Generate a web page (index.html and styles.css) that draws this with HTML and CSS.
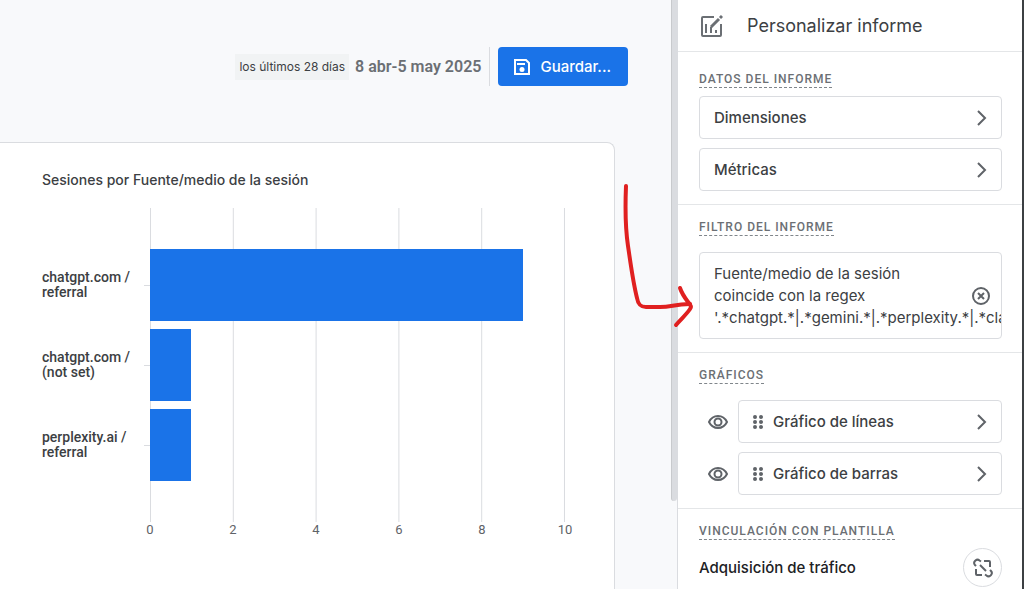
FILE: index.html
```html
<!DOCTYPE html>
<html lang="es">
<head>
  <meta charset="UTF-8">
  <meta name="viewport" content="width=device-width, initial-scale=1.0">
  <title>Personalizar informe</title>
  <link rel="stylesheet" href="styles.css">
</head>
<body>

  <main>
    <div class="toolbar">
      <span class="range-label">los últimos 28 días</span>
      <span class="range-dates">8 abr-5 may 2025</span>
      <span class="separator"></span>
      <button type="button" class="btn-save">
        <svg width="16" height="16" viewBox="0 0 16 16" fill="none" stroke="currentColor" stroke-width="2">
          <path d="M1 1h11l3 3v11H1z"/>
          <path d="M3 5h8" stroke-width="2"/>
          <circle cx="8" cy="10.5" r="2.5" fill="currentColor" stroke="none"/>
        </svg>
        Guardar...
      </button>
    </div>

    <section class="card">
      <h1>Sesiones por Fuente/medio de la sesión</h1>
      <div class="chart">
        <ul class="chart-labels">
          <li>chatgpt.com /<br>referral</li>
          <li>chatgpt.com /<br>(not set)</li>
          <li>perplexity.ai /<br>referral</li>
        </ul>
        <div class="plot">
          <div class="bar" style="width: 90%"></div>
          <div class="bar" style="width: 10%"></div>
          <div class="bar" style="width: 10%"></div>
        </div>
        <ul class="axis">
          <li>0</li>
          <li>2</li>
          <li>4</li>
          <li>6</li>
          <li>8</li>
          <li>10</li>
        </ul>
      </div>
    </section>
  </main>

  <div class="scrollbar"><div class="thumb"></div></div>

  <aside>
    <header>
      <svg width="24" height="24" viewBox="0 0 24 24" fill="none" stroke="currentColor" stroke-width="2">
        <path d="M15 3H4a1 1 0 0 0-1 1v17a1 1 0 0 0 1 1h17a1 1 0 0 0 1-1V10"/>
        <path d="M7 10v9M12 13v6M17 16v3"/>
        <path d="M12 13l8-8" stroke-width="3"/>
        <path d="M21 4l2-2" stroke-width="3"/>
      </svg>
      <h2>Personalizar informe</h2>
    </header>

    <section class="group">
      <h3>Datos del informe</h3>
      <div class="rows">
        <button type="button" class="row">
          <span>Dimensiones</span>
          <svg class="chevron" width="10" height="16" viewBox="0 0 10 16"><path d="M1 1l7 7-7 7"/></svg>
        </button>
        <button type="button" class="row">
          <span>Métricas</span>
          <svg class="chevron" width="10" height="16" viewBox="0 0 10 16"><path d="M1 1l7 7-7 7"/></svg>
        </button>
      </div>
    </section>

    <section class="group spaced">
      <h3>Filtro del informe</h3>
      <div class="filter">
        <p>Fuente/medio de la sesión<br>coincide con la regex<br>'.*chatgpt.*|.*gemini.*|.*perplexity.*|.*cla</p>
        <button type="button" class="btn-icon" aria-label="Quitar filtro">
          <svg width="20" height="20" viewBox="0 0 20 20" fill="none" stroke="currentColor" stroke-width="2">
            <circle cx="10" cy="10" r="8"/>
            <path d="M7 7l6 6M13 7l-6 6"/>
          </svg>
        </button>
      </div>
    </section>

    <section class="group spaced">
      <h3>Gráficos</h3>
      <div class="rows">
        <div class="chart-row">
          <button type="button" class="btn-icon" aria-label="Ocultar gráfico de líneas">
            <svg width="20" height="16" viewBox="0 0 20 16" fill="none" stroke="currentColor">
              <path d="M1 8C3 4 6 2 10 2s7 2 9 6c-2 4-5 6-9 6S3 12 1 8z" stroke-width="2"/>
              <circle cx="10" cy="8" r="3.5" stroke-width="2"/>
            </svg>
          </button>
          <button type="button" class="row">
            <svg class="grip" width="10" height="16" viewBox="0 0 10 16"><path d="M2 3h.01M8 3h.01M2 8h.01M8 8h.01M2 13h.01M8 13h.01"/></svg>
            <span>Gráfico de líneas</span>
            <svg class="chevron" width="10" height="16" viewBox="0 0 10 16"><path d="M1 1l7 7-7 7"/></svg>
          </button>
        </div>
        <div class="chart-row">
          <button type="button" class="btn-icon" aria-label="Ocultar gráfico de barras">
            <svg width="20" height="16" viewBox="0 0 20 16" fill="none" stroke="currentColor">
              <path d="M1 8C3 4 6 2 10 2s7 2 9 6c-2 4-5 6-9 6S3 12 1 8z" stroke-width="2"/>
              <circle cx="10" cy="8" r="3.5" stroke-width="2"/>
            </svg>
          </button>
          <button type="button" class="row">
            <svg class="grip" width="10" height="16" viewBox="0 0 10 16"><path d="M2 3h.01M8 3h.01M2 8h.01M8 8h.01M2 13h.01M8 13h.01"/></svg>
            <span>Gráfico de barras</span>
            <svg class="chevron" width="10" height="16" viewBox="0 0 10 16"><path d="M1 1l7 7-7 7"/></svg>
          </button>
        </div>
      </div>
    </section>

    <section class="group">
      <h3>Vinculación con plantilla</h3>
      <div class="template">
        <span>Adquisición de tráfico</span>
        <button type="button" class="btn-round" aria-label="Desvincular plantilla">
          <svg width="20" height="20" viewBox="0 0 20 20" fill="none" stroke="currentColor" stroke-width="2">
            <path d="M3 8L2 7a3 3 0 0 1 0-4l.5-.5a3 3 0 0 1 4 0L8 3.5"/>
            <path d="M11 3h5a1 1 0 0 1 1 1v5"/>
            <path d="M3 11v5a1 1 0 0 0 1 1h5"/>
            <path d="M7 7l6 6"/>
            <path d="M12 16.5l1.5 1a3 3 0 0 0 4 0l.5-.5a3 3 0 0 0 0-4L17 12"/>
          </svg>
        </button>
      </div>
    </section>

    <svg class="arrow" width="84" height="150" viewBox="0 0 84 150">
      <path d="M6 6C5 30 5 46 8 66c3 20 5 36 9 52 1 6 3 9 9 9h14c12 0 14-3 30-3"/>
      <path d="M60 108c2 6 5 10 8 14 3 3 4 5 2 7-4 6-9 10-14 16"/>
    </svg>
  </aside>

</body>
</html>
```

FILE: styles.css
```css
* {
  margin: 0;
  padding: 0;
  box-sizing: border-box;
}

body {
  display: flex;
  height: 100vh;
  overflow: hidden;
  font-family: Inter, Roboto, sans-serif;
  font-size: 15px;
  color: #3c4043;
  background-color: #f8f9fb;
}

ul {
  list-style: none;
}

svg {
  display: block;
  flex-shrink: 0;
}

button {
  font: inherit;
  color: inherit;
  background: none;
  border: none;
  cursor: pointer;
}

main {
  flex: 1;
  display: flex;
  flex-direction: column;
  min-width: 0;
}

.toolbar {
  display: flex;
  align-items: center;
  justify-content: flex-end;
  padding: 47px 43px 56px 0;
}

.range-label {
  padding: 4px;
  margin-right: 6px;
  font-size: 12px;
  line-height: 18px;
  background-color: #f1f3f4;
}

.range-dates {
  font-family: Roboto, sans-serif;
  font-size: 16px;
  font-weight: 600;
  color: #6b6f74;
}

.separator {
  width: 1px;
  height: 39px;
  margin: 0 8px;
  background-color: #dadce0;
}

.btn-save {
  display: flex;
  align-items: center;
  gap: 10px;
  height: 39px;
  padding: 0 17px 0 16px;
  font-weight: 500;
  color: #fff;
  background-color: #1a73e8;
  border-radius: 4px;
}

.card {
  flex: 1;
  margin-right: 56px;
  padding: 27px 49px 0 42px;
  background-color: #fff;
  border: 1px solid #dadce0;
  border-width: 1px 1px 0 0;
  border-radius: 0 8px 0 0;
}

.card h1 {
  font-size: 14px;
  font-weight: 500;
  line-height: 20px;
}

.chart {
  display: grid;
  grid-template-columns: 108px 1fr;
  margin-top: 18px;
  font-family: Roboto, sans-serif;
}

.chart-labels,
.plot {
  display: grid;
  grid-auto-rows: 72px;
  gap: 8px;
  padding: 41px 0;
}

.chart-labels li {
  display: grid;
  grid-template-columns: 1fr 6px;
  align-items: center;
  font-size: 14px;
  font-weight: 500;
  line-height: 15px;
}

.chart-labels li::after {
  content: "";
  height: 1px;
  background-color: #dadce0;
}

.plot {
  background-image: linear-gradient(to right, #dadce0 1px, transparent 1px);
  background-size: 20% 100%;
  border-right: 1px solid #dadce0;
}

.bar {
  background-color: #1a73e8;
}

.axis {
  grid-column: 2;
  display: flex;
  justify-content: space-between;
  margin: 0 -20px;
  font-size: 13px;
  line-height: 16px;
  color: #5f6368;
}

.axis li {
  width: 40px;
  text-align: center;
}

.scrollbar {
  width: 6px;
}

.thumb {
  height: 85%;
  background-color: #dadce0;
  border-left: 1px solid #c8cacd;
  border-radius: 0 0 4px 4px;
}

aside {
  position: relative;
  width: 347px;
  background-color: #fff;
  border-left: 1px solid #dadce0;
  border-right: 2px solid #3c4043;
}

aside header {
  display: flex;
  align-items: center;
  gap: 24px;
  height: 52px;
  padding: 0 21px;
  color: #6b6f74;
  border-bottom: 1px solid #e4e6e8;
}

aside h2 {
  font-size: 18px;
  font-weight: 400;
  color: #3c4043;
}

.group {
  padding: 15px 20px 13px 21px;
  border-bottom: 1px solid #e4e6e8;
}

header + .group {
  padding-top: 20px;
}

.group:last-of-type {
  border-bottom: none;
}

.group h3 {
  width: fit-content;
  margin-bottom: 8px;
  font-family: Roboto, sans-serif;
  font-size: 12px;
  font-weight: 500;
  line-height: 15px;
  letter-spacing: 1px;
  text-transform: uppercase;
  color: #6b6f74;
  border-bottom: 1px dashed #80868b;
}

.spaced h3 {
  margin-bottom: 16px;
}

.rows {
  display: grid;
  gap: 9px;
}

.row {
  flex: 1;
  display: flex;
  align-items: center;
  gap: 10px;
  height: 43px;
  padding: 0 14px;
  font-weight: 500;
  border: 1px solid #dadce0;
  border-radius: 4px;
}

.chevron {
  margin-left: auto;
  fill: none;
  stroke: #5f6368;
  stroke-width: 2;
}

.grip {
  fill: none;
  stroke: #5f6368;
  stroke-width: 4;
  stroke-linecap: round;
}

.chart-row {
  display: flex;
  align-items: center;
  gap: 10px;
  padding-left: 9px;
}

.btn-icon {
  color: #5f6368;
}

.filter {
  display: flex;
  align-items: center;
  height: 87px;
  padding: 0 10px 0 14px;
  overflow: hidden;
  border: 1px solid #dadce0;
  border-radius: 4px;
}

.filter p {
  flex: 1;
  min-width: 0;
  line-height: 22px;
  white-space: nowrap;
}

.template {
  display: flex;
  align-items: center;
  justify-content: space-between;
  font-weight: 500;
  color: #202124;
}

.btn-round {
  display: grid;
  place-items: center;
  width: 39px;
  height: 39px;
  color: #5f6368;
  border: 1px solid #dadce0;
  border-radius: 50%;
}

/* hand-drawn arrow pointing at the filter */
.arrow {
  position: absolute;
  top: 180px;
  left: -58px;
  fill: none;
  stroke: #e02020;
  stroke-width: 4;
  stroke-linecap: round;
  stroke-linejoin: round;
}
```
